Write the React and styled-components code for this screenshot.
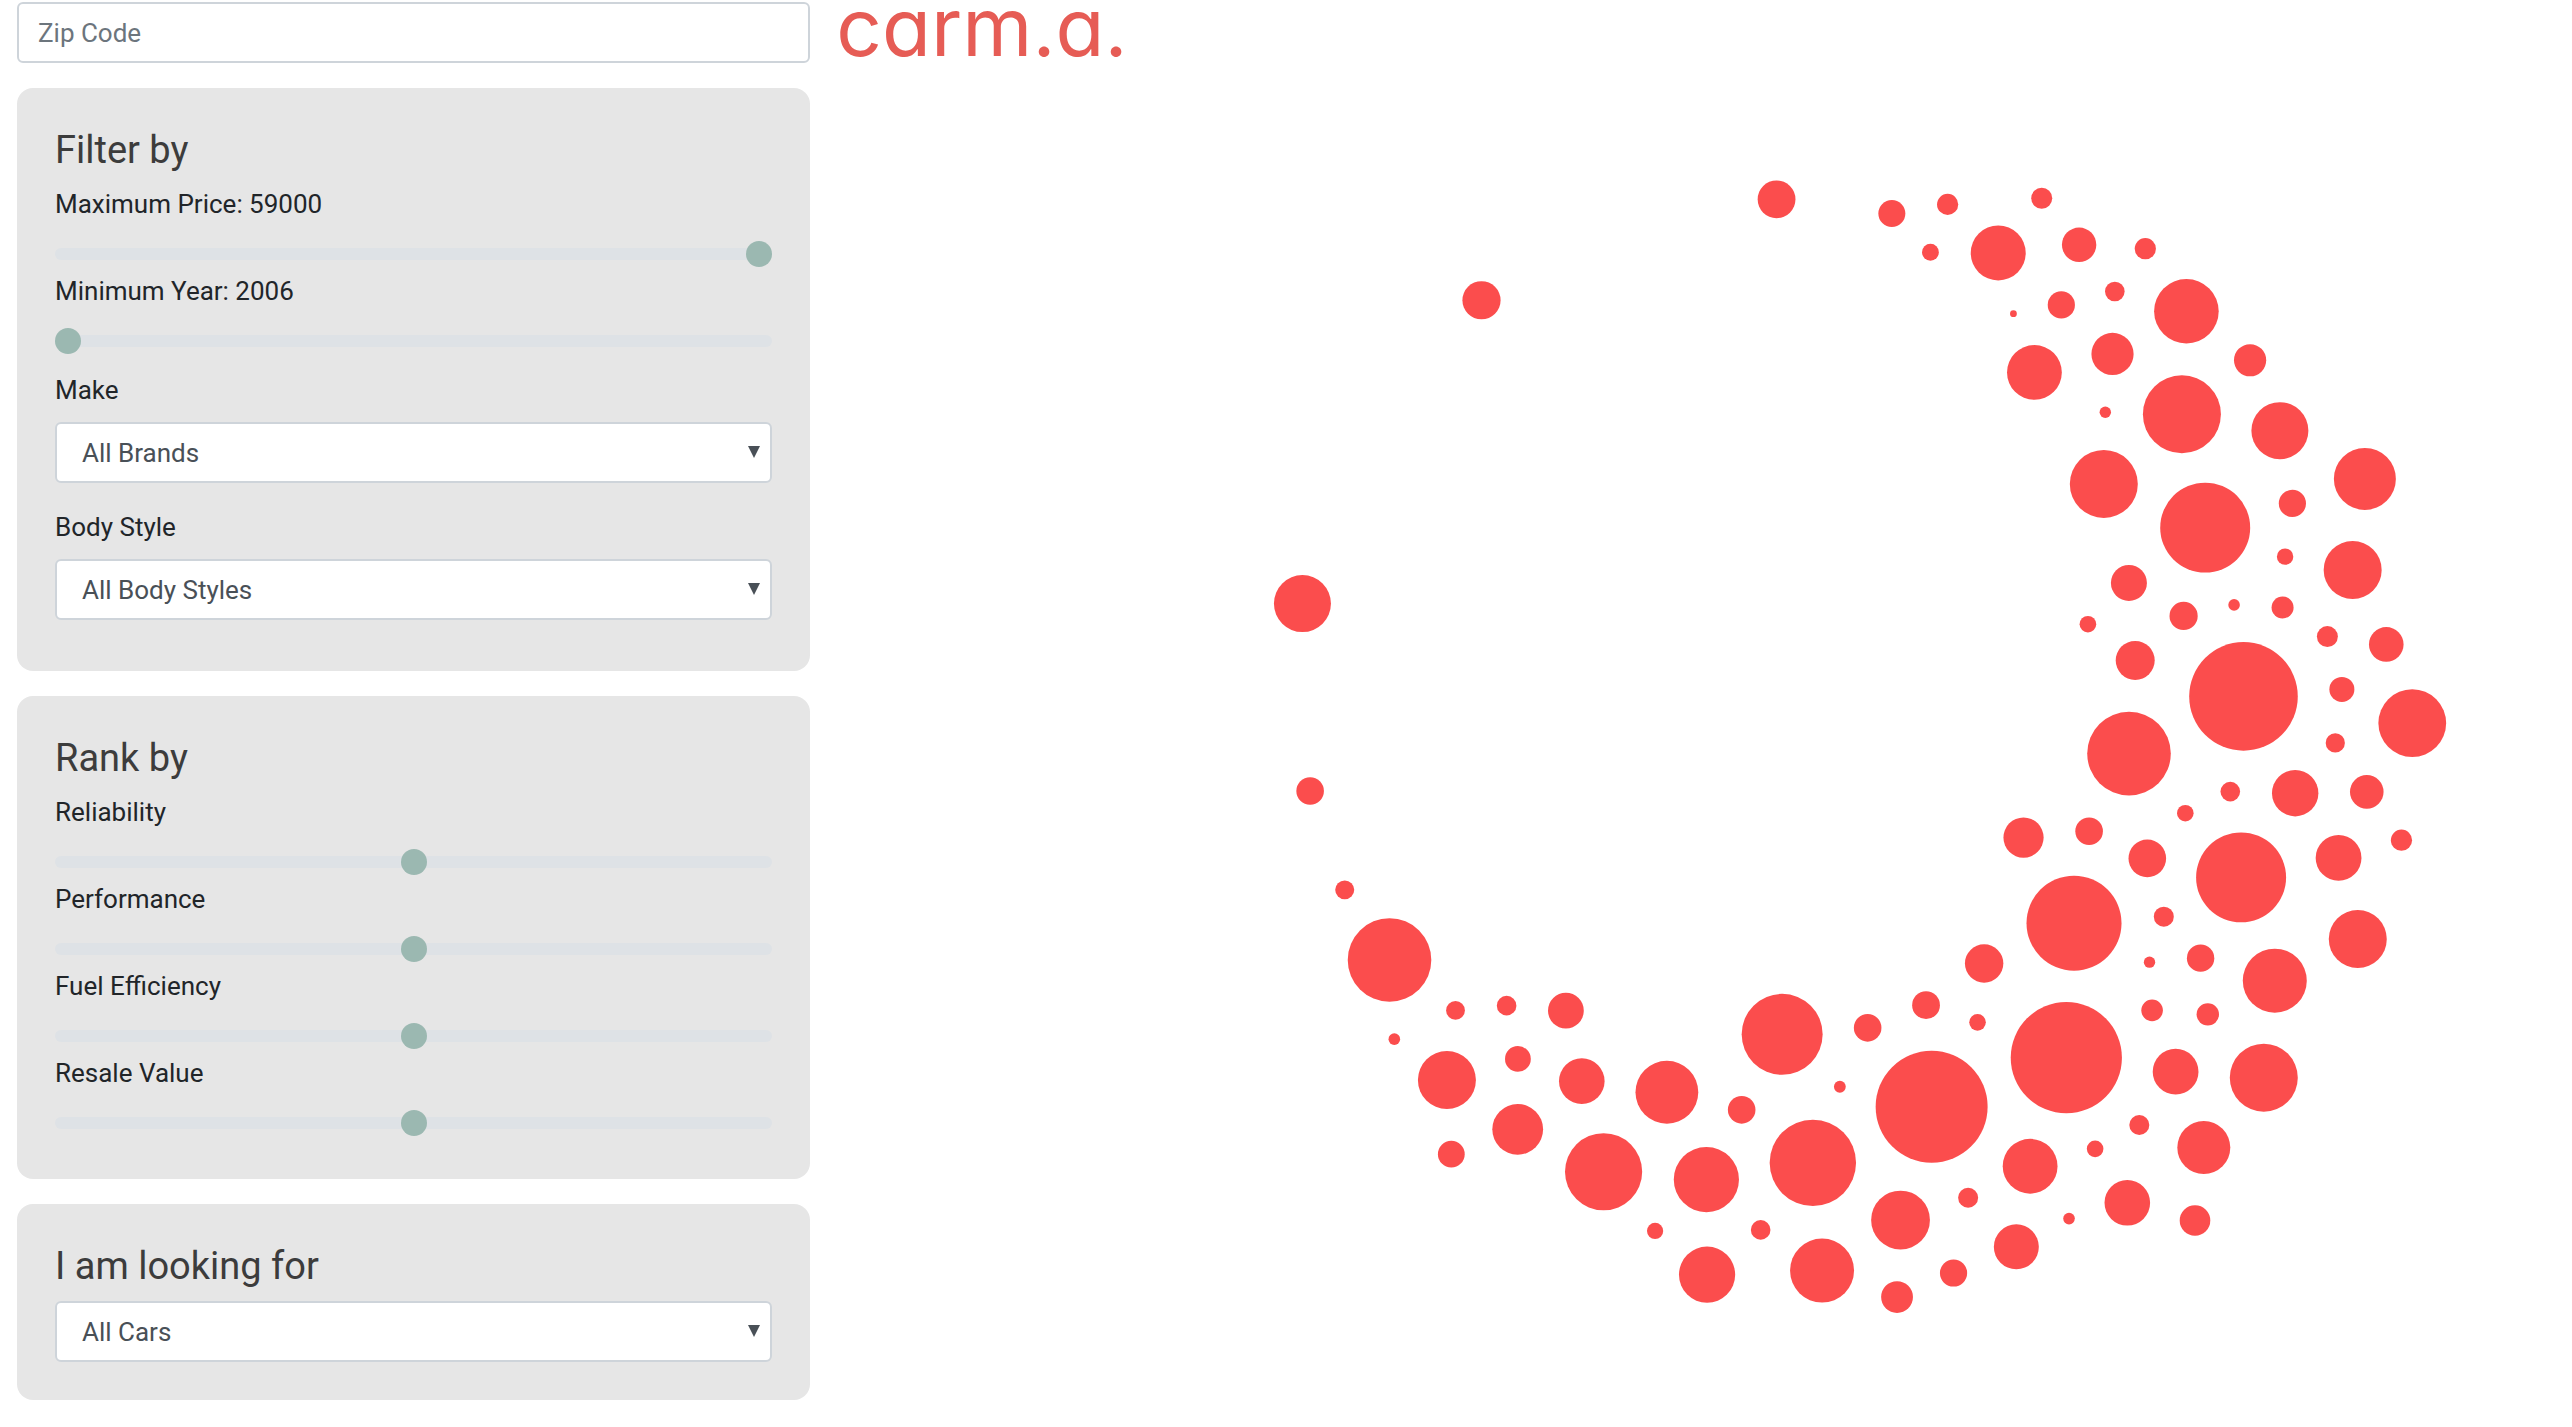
import React, { useState } from "react";
import styled, { createGlobalStyle } from "styled-components";

const GlobalStyle = createGlobalStyle`
  *, *::before, *::after { box-sizing: border-box; }
  body {
    margin: 0;
    background: #fff;
    color: #212529;
    font-family: Roboto, "Liberation Sans", sans-serif;
    font-size: 26px;
    line-height: 38px;
  }
`;

const Page = styled.div`
  display: grid;
  grid-template-columns: minmax(0, 6fr) minmax(0, 13fr);
  column-gap: 26px;
  padding: 2px 17px 25px;
`;

const Sidebar = styled.aside`
  display: flex;
  flex-direction: column;
  gap: 25px;
`;

const ZipInput = styled.input`
  width: 100%;
  height: 61px;
  padding: 0 19px;
  border: 2px solid #ced4da;
  border-radius: 6px;
  background: #fff;
  color: #495057;
  font: inherit;

  &::placeholder {
    color: #6c757d;
    opacity: 1;
  }
`;

const Card = styled.section`
  padding: 38px 38px ${(p) => (p.$roomy ? 51 : 38)}px;
  border-radius: 16px;
  background: #e6e6e6;
`;

const CardTitle = styled.h2`
  margin: 0 0 11px;
  color: #3c3c3c;
  font-size: 38px;
  font-weight: 400;
  line-height: 48px;
`;

const Field = styled.div`
  display: flex;
  flex-direction: column;
  gap: 13px;
`;

const SelectGroup = styled.div`
  display: flex;
  flex-direction: column;
  gap: 25px;
  margin-top: 12px;
`;

const Range = styled.input`
  appearance: none;
  width: 100%;
  height: 36px;
  margin: 0;
  background: transparent;

  &::-webkit-slider-runnable-track {
    height: 12px;
    border-radius: 6px;
    background: #dee2e6;
  }

  &::-webkit-slider-thumb {
    appearance: none;
    width: 26px;
    height: 26px;
    margin-top: -7px;
    border-radius: 50%;
    background: #9bb8b1;
  }
`;

const SelectFrame = styled.div`
  position: relative;
`;

const SelectBox = styled.select`
  appearance: none;
  display: block;
  width: 100%;
  height: 61px;
  padding: 0 38px 0 25px;
  border: 2px solid #ced4da;
  border-radius: 6px;
  background: #fff;
  color: #495057;
  font: inherit;
`;

const Caret = styled.svg`
  position: absolute;
  top: 24px;
  right: 12px;
  width: 12px;
  height: 12px;
  fill: #495057;
  pointer-events: none;
`;

const Main = styled.main`
  min-width: 0;
`;

const Logo = styled.h1`
  height: 68px;
  margin: 0;
  color: #e65c55;
  font-family: Inter, sans-serif;
  font-size: 80px;
  font-weight: 400;
  font-feature-settings: "cv11";
  line-height: 50px;
`;

const Chart = styled.svg`
  display: block;
  width: 100%;
  height: auto;
  fill: #fb4d4d;
`;

const RANKINGS = ["Reliability", "Performance", "Fuel Efficiency", "Resale Value"];

// One entry per car: centre x, centre y, radius.
const CARS = [
  [1776.7, 199.3, 18.9], [1481.6, 300.3, 19.1], [1302.5, 603.7, 28.5], [1892, 213.5, 13.5],
  [1947.8, 204.4, 10.6], [2041.9, 198.3, 10.5], [1930.6, 252.3, 8.4], [1998.4, 253, 27.5],
  [2079.3, 244.8, 17.2], [2145.5, 248.7, 10.6], [2115, 291.5, 9.8], [2061.5, 305, 13.6],
  [2013.6, 313.7, 3.4], [2186.6, 311.3, 32.3], [2034.6, 372.5, 27.4], [2112.7, 354, 21.1],
  [2250.3, 360.3, 16.1], [2105.5, 412.3, 5.7], [2182.1, 414.3, 39], [2280.1, 430.7, 28.5],
  [2104, 484, 34], [2365.1, 479, 31], [2292.6, 503.5, 13.6], [2205.4, 527.7, 45],
  [2285.3, 556.7, 8.2], [2352.9, 570, 29], [2129.1, 583, 18], [2088.1, 624.3, 8.3],
  [2183.8, 616, 14.1], [2234.3, 605, 5.8], [2282.8, 607.5, 11], [2327.6, 636.7, 10.5],
  [2386.5, 644.5, 17.3], [2135.4, 660.5, 19.5], [2243.7, 696.5, 54.3], [2342.1, 689.5, 12.5],
  [2412.5, 723.2, 33.9], [2129.2, 753.7, 41.8], [2335.5, 743, 9.6], [2230.5, 791.7, 9.8],
  [2295.4, 793.3, 23.2], [2367, 792, 16.8], [2185.5, 813.3, 8.3], [2023.7, 837.7, 20.1],
  [2089.3, 831.3, 13.8], [2147.5, 858.5, 18.8], [2241.3, 877.5, 45], [2338.8, 858, 22.9],
  [2401.7, 840.3, 10.6], [2164, 916.8, 10], [2358, 939.2, 29], [2149.7, 962.3, 5.7],
  [2200.8, 958.3, 13.7], [2275, 980.8, 32], [2152.3, 1010.5, 10.8], [2208, 1014.5, 11.2],
  [2175.8, 1071.8, 22.9], [2264, 1077.8, 34], [2139.5, 1125.2, 10], [2204, 1147.7, 26.5],
  [2095.3, 1149, 8.3], [2127.5, 1203, 22.8], [2195.2, 1220.7, 15.3], [2074.2, 923.3, 47.5],
  [2066.5, 1057.8, 55.6], [1984.3, 963.6, 19.2], [1926.2, 1005.3, 13.9], [1867.8, 1028, 13.8],
  [1977.7, 1022.5, 8.3], [1782.3, 1034.5, 40.5], [1840, 1086.9, 5.9], [1741.8, 1110, 13.8],
  [1931.8, 1106.9, 56], [1813, 1163, 43.2], [2030.3, 1166.4, 27.4], [1968.3, 1197.9, 10],
  [1900.7, 1220.2, 29.4], [1760.8, 1230.1, 9.8], [2069.2, 1218.8, 5.8], [2016.5, 1247, 22.5],
  [1822.2, 1270.8, 32], [1953.7, 1273.2, 13.6], [1897.2, 1297.3, 15.9], [1310.2, 791.1, 13.8],
  [1344.8, 890, 9.5], [1389.6, 960.1, 41.8], [1455.6, 1010.6, 9.4], [1506.7, 1005.8, 9.8],
  [1566, 1010.8, 17.9], [1394.4, 1039.3, 5.8], [1447, 1080.2, 29], [1518, 1059.1, 12.9],
  [1581.9, 1081.3, 22.8], [1667, 1092.4, 31.4], [1517.8, 1129.5, 25.4], [1451.4, 1154.3, 13.4],
  [1603.7, 1171.9, 38.6], [1706.5, 1179.7, 32.6], [1655.2, 1231.1, 8.1], [1707.2, 1274.9, 28.1],
];

function Slider({ id, label, ...rest }) {
  return (
    <Field>
      <label htmlFor={id}>{label}</label>
      <Range id={id} type="range" {...rest} />
    </Field>
  );
}

function Select({ options, ...rest }) {
  return (
    <SelectFrame>
      <SelectBox {...rest}>
        {options.map((option) => (
          <option key={option}>{option}</option>
        ))}
      </SelectBox>
      <Caret viewBox="0 0 12 12" aria-hidden="true">
        <path d="M0 0h12L6 12z" />
      </Caret>
    </SelectFrame>
  );
}

export default function App() {
  const [price, setPrice] = useState(59000);
  const [year, setYear] = useState(2006);

  return (
    <>
      <GlobalStyle />
      <Page>
        <Sidebar>
          <ZipInput type="text" placeholder="Zip Code" aria-label="Zip Code" />

          <Card $roomy>
            <CardTitle>Filter by</CardTitle>
            <Slider
              id="price"
              label={`Maximum Price: ${price}`}
              min={9000}
              max={59000}
              step={1000}
              value={price}
              onChange={(e) => setPrice(Number(e.target.value))}
            />
            <Slider
              id="year"
              label={`Minimum Year: ${year}`}
              min={2006}
              max={2018}
              value={year}
              onChange={(e) => setYear(Number(e.target.value))}
            />
            <SelectGroup>
              <Field>
                <label htmlFor="make">Make</label>
                <Select id="make" options={["All Brands"]} />
              </Field>
              <Field>
                <label htmlFor="body">Body Style</label>
                <Select id="body" options={["All Body Styles"]} />
              </Field>
            </SelectGroup>
          </Card>

          <Card>
            <CardTitle>Rank by</CardTitle>
            {RANKINGS.map((name, i) => (
              <Slider key={name} id={`rank-${i}`} label={name} min={0} max={100} defaultValue={50} />
            ))}
          </Card>

          <Card>
            <CardTitle id="looking-for">I am looking for</CardTitle>
            <Select aria-labelledby="looking-for" options={["All Cars"]} />
          </Card>
        </Sidebar>

        <Main>
          <Logo>carm.a.</Logo>
          <Chart viewBox="836 70 1719 1330" role="img" aria-label="Cars by rank">
            {CARS.map(([x, y, r]) => (
              <circle key={`${x}-${y}`} cx={x} cy={y} r={r} />
            ))}
          </Chart>
        </Main>
      </Page>
    </>
  );
}
